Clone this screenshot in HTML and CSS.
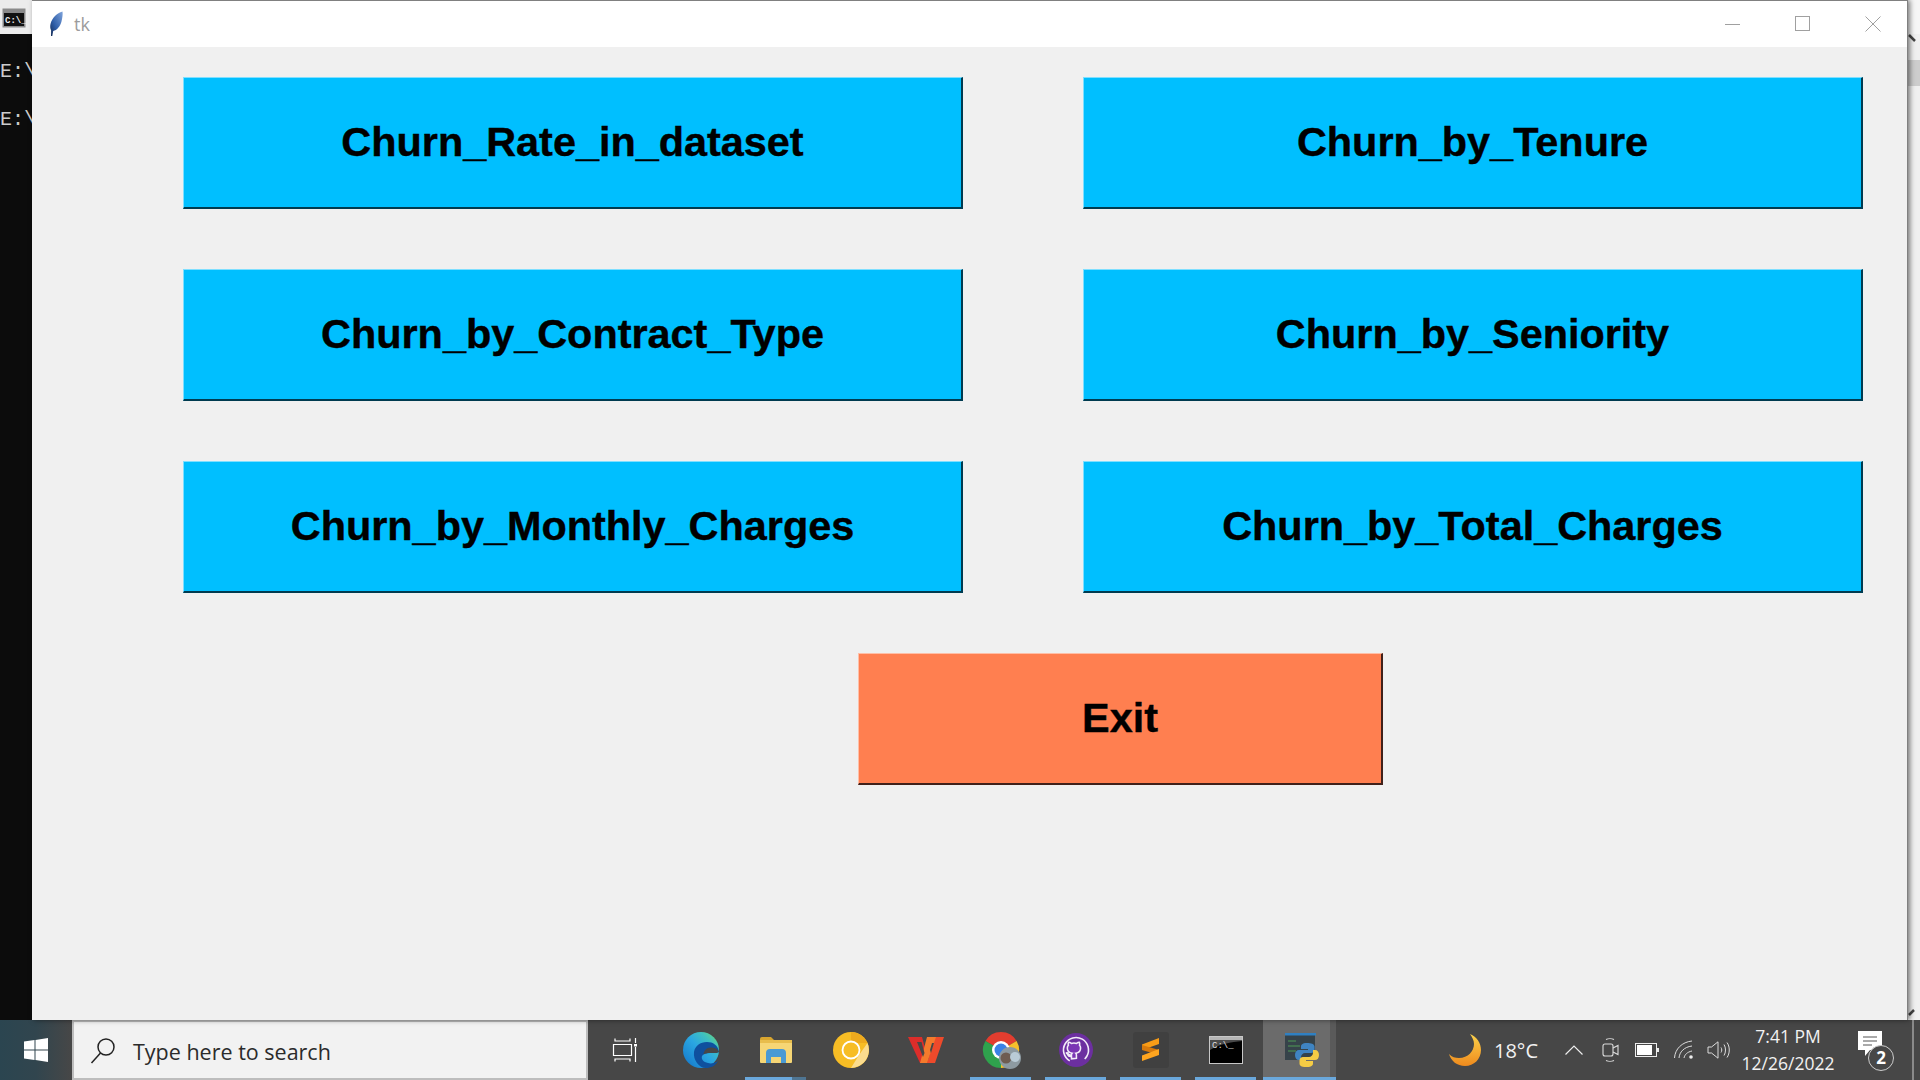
FILE: index.html
```html
<!DOCTYPE html>
<html lang="en">
<head>
    <meta charset="UTF-8">
    <title>tk</title>
    <link rel="stylesheet" href="styles.css">
</head>
<body>
    <div class="desktop">
        <div class="console">
            <div class="console-head">
                <svg width="24" height="20" viewBox="0 0 24 20">
                    <rect x="0.5" y="0.5" width="23" height="19" fill="#8a8a8a"/>
                    <rect x="2" y="5" width="20" height="13" fill="#111"/>
                    <text x="3" y="15" class="console-icon-text">C:\_</text>
                </svg>
            </div>
            <div class="console-body">
                <div>E:\</div>
                <div>E:\</div>
            </div>
        </div>

        <div class="window">
            <div class="titlebar">
                <svg class="feather" width="16" height="26" viewBox="0 0 16 26">
                    <defs>
                        <linearGradient id="featherFill" x1="1" y1="0" x2="0" y2="1">
                            <stop offset="0" stop-color="#7fa4dc"/>
                            <stop offset="0.6" stop-color="#2f5ea8"/>
                            <stop offset="1" stop-color="#14284f"/>
                        </linearGradient>
                    </defs>
                    <path d="M13.5 0.5C8 2 3 7 1.5 13c-.6 2.6-.2 4.8.6 6.3L2 25h1.3l.9-5c3.8-.8 7-4.5 8.3-9.5.8-3.3 1.5-7.5 1-10z" fill="url(#featherFill)"/>
                </svg>
                <span class="title-text">tk</span>
                <div class="window-controls">
                    <svg width="16" height="16" viewBox="0 0 16 16"><path d="M0 8.5h15" stroke="#a0a0a0" fill="none"/></svg>
                    <svg width="16" height="16" viewBox="0 0 16 16"><rect x="0.5" y="0.5" width="14" height="14" stroke="#a0a0a0" fill="none"/></svg>
                    <svg width="16" height="16" viewBox="0 0 16 16"><path d="M0.5 0.5l15 15M15.5 0.5l-15 15" stroke="#a0a0a0" fill="none"/></svg>
                </div>
            </div>
            <div class="app">
                <div class="button-grid">
                    <button class="chart-button">Churn_Rate_in_dataset</button>
                    <button class="chart-button">Churn_by_Tenure</button>
                    <button class="chart-button">Churn_by_Contract_Type</button>
                    <button class="chart-button">Churn_by_Seniority</button>
                    <button class="chart-button">Churn_by_Monthly_Charges</button>
                    <button class="chart-button">Churn_by_Total_Charges</button>
                </div>
                <button class="exit-button">Exit</button>
            </div>
        </div>

        <div class="console-edge">
            <div class="edge-head"></div>
            <div class="edge-track">
                <svg width="12" height="10" viewBox="0 0 12 10"><path d="M1 1l6 6" stroke="#444" stroke-width="2.5" fill="none"/></svg>
                <div class="edge-thumb"></div>
                <div class="edge-fill"></div>
                <svg width="12" height="12" viewBox="0 0 12 12"><path d="M1 7l5-5" stroke="#444" stroke-width="2.5" fill="none"/></svg>
            </div>
        </div>
    </div>

    <div class="taskbar">
        <div class="start">
            <svg width="24" height="24" viewBox="0 0 24 24" fill="#fff">
                <path d="M0 3.5l10.5-1.5v9.500H0zM11.500 1.900L24 0v11.500H11.500zM0 12.500h10.500V22L0 20.500zM11.500 12.500H24V24l-12.500-1.900z"/>
            </svg>
        </div>
        <div class="search">
            <svg width="26" height="28" viewBox="0 0 26 28" fill="none" stroke="#222" stroke-width="1.5">
                <circle cx="16" cy="10" r="8"/>
                <path d="M10.5 16L1.500 26"/>
            </svg>
            <span>Type here to search</span>
        </div>

        <div class="task-item task-view">
            <svg width="26" height="24" viewBox="0 0 26 24" fill="none" stroke="#fff" stroke-width="1.2">
                <path d="M3 .5v2.500h15V.5M3 23.500V21h15v2.500M1.500 6.500h18v11h-18zM23.500 0v5M23.500 9v15"/>
                <rect x="22" y="6" width="3" height="2.5" fill="#fff" stroke="none"/>
            </svg>
        </div>
        <div class="task-item">
            <svg width="36" height="36" viewBox="0 0 36 36">
                <defs>
                    <linearGradient id="edgeOuter" x1="0" y1="1" x2="1" y2="0">
                        <stop offset="0" stop-color="#1273c8"/>
                        <stop offset="0.5" stop-color="#2aa6e2"/>
                        <stop offset="0.75" stop-color="#3fc0c0"/>
                        <stop offset="1" stop-color="#74dc66"/>
                    </linearGradient>
                </defs>
                <circle cx="18" cy="18" r="18" fill="url(#edgeOuter)"/>
                <path d="M36 20c-1-7-6-10-12-10-7 0-12 4-13 10-1 8 5 16 12 16 5 0 9-2 12-7-3 2-7 3-10 2-5-1-7-4-6-7 1-2 4-3 8-3 3 0 6 .5 9-1z" fill="#0f509e"/>
                <path d="M36 20c-3 1.500-6 1-9 1-3 0-5 .5-6.500 1.500 .5-4 3-7 7-7 4 0 7 1 8.500 4.500z" fill="#474747"/>
            </svg>
        </div>
        <div class="task-item task-open task-split">
            <svg width="32" height="28" viewBox="0 0 32 28">
                <path d="M0 3a2 2 0 0 1 2-2h9l4 4H0z" fill="#d8a52f"/>
                <rect x="0" y="4" width="32" height="23" rx="1" fill="#f6d675"/>
                <rect x="0" y="4" width="32" height="3" fill="#e8bd4c"/>
                <path d="M6 27V17a4 4 0 0 1 4-4h12a4 4 0 0 1 4 4v10h-5v-6H11v6z" fill="#4a9ad4"/>
            </svg>
        </div>
        <div class="task-item">
            <svg width="36" height="36" viewBox="0 0 36 36">
                <circle cx="18" cy="18" r="18" fill="#f7bd25"/>
                <path d="M18 0a18 18 0 0 1 16.500 11H18z" fill="#eeaa1e"/>
                <path d="M34.500 11A18 18 0 0 1 18 36l8-13 8.500-12z" fill="#fbdc8e"/>
                <circle cx="18" cy="18" r="8.500" fill="#f7bd25" stroke="#fff" stroke-width="1.8"/>
            </svg>
        </div>
        <div class="task-item">
            <svg width="36" height="28" viewBox="0 0 36 28">
                <path d="M0 1h14l7 26h-9z" fill="#dc2d2a"/>
                <path d="M36 1H27l-8 26h8z" fill="#ee4a2b"/>
                <path d="M19 1h9l-9 26h-7z" fill="#f47a2c"/>
                <path d="M9 6h4.500l3 11-1.500 4zM24 7h2l-3 10-1-3z" fill="#474747"/>
            </svg>
        </div>
        <div class="task-item task-open">
            <svg class="chrome-icon" width="36" height="36" viewBox="0 0 36 36">
                <path d="M18 18L2.400 9A18 18 0 0 1 33.600 9z" fill="#e23d2f"/>
                <path d="M18 18L33.600 9A18 18 0 0 1 18 36z" fill="#f6c02c"/>
                <path d="M18 18L18 36A18 18 0 0 1 2.400 9z" fill="#2fa24d"/>
                <circle cx="18" cy="18" r="9" fill="#fff"/>
                <circle cx="18" cy="18" r="6.500" fill="#3b82e6"/>
                <circle cx="27" cy="26" r="11" fill="#8d9aa1"/>
                <circle cx="23" cy="26" r="5.500" fill="#6e5c50"/>
                <circle cx="32" cy="25" r="5" fill="#b9cbd6"/>
            </svg>
        </div>
        <div class="task-item task-open">
            <svg width="34" height="34" viewBox="0 0 34 34">
                <circle cx="17" cy="17" r="17" fill="#6c2fa0"/>
                <circle cx="17" cy="17" r="12.500" fill="none" stroke="#f2ecf8" stroke-width="1.6" stroke-dasharray="62 17" transform="rotate(120 17 17)"/>
                <g transform="translate(6.5 6.5) scale(1.3)">
                    <path fill="#7a35b4" stroke="#f2ecf8" stroke-width="1.2" d="M4.600 14.900c0-.4 0-1.200 0-2-2 .4-2.600-.5-2.800-1-.1-.3-.5-1-.8-1.200-.3-.1-.7-.5 0-.5.600 0 1.100.6 1.200.8.700 1.200 1.900.9 2.400.7.100-.5.300-.9.500-1.100-1.800-.2-3.700-.9-3.700-4 0-.9.300-1.600.8-2.200-.1-.2-.4-1 .1-2.200 0 0 .7-.2 2.200.8.600-.2 1.300-.3 2-.3s1.400.1 2 .3c1.500-1 2.200-.8 2.200-.8.400 1.100.2 1.900.1 2.200.5.600.8 1.300.8 2.200 0 3.100-1.900 3.800-3.700 4 .3.300.5.800.5 1.500 0 1.100 0 2 0 2.300z"/>
                </g>
            </svg>
        </div>
        <div class="task-item task-open">
            <svg width="36" height="36" viewBox="0 0 36 36">
                <rect width="36" height="36" rx="3" fill="#404040"/>
                <path d="M26 6v6L9 18v-5.500z" fill="#f89c17"/>
                <path d="M9 13l17 5v5L9 18z" fill="#d87a0c"/>
                <path d="M26 17v6L9 29v-5.500z" fill="#ffa51f"/>
            </svg>
        </div>
        <div class="task-item task-open">
            <svg width="34" height="28" viewBox="0 0 34 28">
                <rect x="0.5" y="0.5" width="33" height="27" fill="#000" stroke="#c8c8c8"/>
                <rect x="1" y="1" width="32" height="3" fill="#b5b5b5"/>
                <path d="M1 14C10 8 22 6 33 5V4H1z" fill="#4a4a4a"/>
                <text x="3" y="12" class="cmd-text">C:\_</text>
            </svg>
        </div>
        <div class="task-item task-active">
            <svg class="python-icon" width="36" height="36" viewBox="0 0 36 36">
                <rect x="1" y="2" width="30" height="26" fill="#36434a"/>
                <rect x="1" y="1" width="31" height="2.5" fill="#2f80c2"/>
                <path d="M4 9h8M4 14h12M4 19h8" stroke="#4f9a54" stroke-width="1.2"/>
                <path d="M22 11c-5 0-6 2-6 3.500V17h7v1h-9c-2.500 0-4 2-4 5s1.500 5 4 5h2v-3c0-2 2-4 4-4h6c2 0 3.500-1.500 3.500-3.500v-3C29.500 12 26 11 22 11z" fill="#3f84c2" transform="translate(1 0)"/>
                <path d="M24 35c5 0 6-2 6-3.500V29h-7v-1h9c2.500 0 4-2 4-5s-1.500-5-4-5h-2v3c0 2-2 4-4 4h-6c-2 0-3.500 1.500-3.500 3.500v3c0 3 3.500 3.500 7.500 3.500z" fill="#f5cc45" transform="translate(-1 0)"/>
            </svg>
        </div>
        <div class="task-stub"></div>

        <div class="tray">
            <svg class="tray-moon" width="34" height="34" viewBox="0 0 34 34">
                <defs>
                    <linearGradient id="moonFill" x1="0" y1="0" x2="0" y2="1">
                        <stop offset="0" stop-color="#fbd24a"/>
                        <stop offset="1" stop-color="#ef8a1d"/>
                    </linearGradient>
                </defs>
                <path d="M22 1c7 3 11 9 11 16 0 9-7 16-16 16-8 0-14-5-16-12 3 3 6 4 10 4 9 0 15-7 15-14 0-4-2-7-4-10z" fill="url(#moonFill)"/>
            </svg>
            <span class="temp">18°C</span>
            <svg class="tray-chevron" width="18" height="10" viewBox="0 0 18 10"><path d="M.5 9.500L9 1l8.500 8.500" stroke="#eee" stroke-width="1.2" fill="none"/></svg>
            <svg class="tray-meet" width="18" height="24" viewBox="0 0 18 24" fill="none" stroke="#ddd" stroke-width="1.1">
                <rect x="1" y="6" width="10" height="12" rx="2"/>
                <path d="M11 10l5-2.500v9L11 14"/>
                <path d="M4 1.500c2-1 6-1 8 0M4 22.500c2 1 6 1 8 0"/>
            </svg>
            <svg class="tray-battery" width="24" height="14" viewBox="0 0 24 14">
                <rect x="0.5" y="0.5" width="21" height="13" fill="none" stroke="#eee"/>
                <rect x="2" y="2" width="15" height="10" fill="#fff"/>
                <rect x="22" y="5" width="2" height="4" fill="#eee"/>
            </svg>
            <svg class="tray-wifi" width="20" height="20" viewBox="0 0 20 20" fill="none" stroke="#ddd">
                <path d="M.5 18C1 9 8 2 18 1M5 18c.5-6 5-11 13-12M10 18c.5-3 3-6 8-7"/>
                <circle cx="17" cy="17" r="1.8" fill="#eee" stroke="none"/>
            </svg>
            <svg class="tray-volume" width="24" height="18" viewBox="0 0 24 18" fill="none" stroke="#ddd">
                <path d="M1 6h3.500L11 .8v16.400L4.500 12H1z"/>
                <path d="M14 6.500c1 1.500 1 3.500 0 5M17 3.500c2 3 2 8 0 11M20 1.500c3 4 3 11 0 15"/>
            </svg>
            <div class="clock">
                <span>7:41 PM</span>
                <span>12/26/2022</span>
            </div>
            <div class="notify">
                <svg width="24" height="26" viewBox="0 0 24 26">
                    <path d="M0 0h24v19H12l-5 6v-6H0z" fill="#fff"/>
                    <path d="M5 6h14M5 10h14M5 14h9" stroke="#555"/>
                </svg>
                <span class="notify-badge">2</span>
            </div>
            <div class="show-desktop"></div>
        </div>
    </div>
</body>
</html>
```

FILE: styles.css
```css
html, body {
    margin: 0;
    height: 1080px;
    overflow: hidden;
    background: #0c0c0c;
}
svg {
    display: block;
    flex: none;
}
.desktop {
    display: flex;
    height: 1020px;
}

/* console behind the tk window */
.console {
    width: 32px;
    flex: none;
    overflow: hidden;
}
.console-head {
    height: 34px;
    box-sizing: border-box;
    padding: 8px 0 0 2px;
    background: #ececec;
}
.console-icon-text {
    font-family: "Liberation Mono", monospace;
    font-size: 9px;
    font-weight: bold;
    fill: #eee;
}
.console-body {
    padding-top: 14px;
    color: #cccccc;
    font-family: "Liberation Mono", monospace;
    font-size: 20px;
    line-height: 48px;
    white-space: nowrap;
}
.console-edge {
    width: 12px;
    flex: none;
    display: flex;
    flex-direction: column;
}
.edge-head {
    height: 34px;
    background: #f6f6f6;
}
.edge-track {
    flex: 1;
    display: flex;
    flex-direction: column;
    background: #f0f0f0;
}
.edge-thumb {
    height: 26px;
    margin-top: 16px;
    background: #cdcdcd;
}
.edge-fill {
    flex: 1;
}

/* tk window */
.window {
    width: 1876px;
    flex: none;
    box-sizing: border-box;
    display: flex;
    flex-direction: column;
    position: relative;
    z-index: 1;
    border-top: 1px solid #808080;
    border-right: 1px solid #808080;
    background: #f0f0f0;
    box-shadow: 2px 0 5px rgba(0, 0, 0, 0.5);
}
.titlebar {
    height: 46px;
    flex: none;
    display: flex;
    align-items: center;
    background: #fff;
}
.feather {
    margin-left: 17px;
}
.title-text {
    margin-left: 9px;
    color: #9c9c9c;
    font-family: "Open Sans", sans-serif;
    font-size: 18px;
}
.window-controls {
    margin-left: auto;
    margin-right: 26px;
    display: flex;
    gap: 54px;
}
.app {
    padding: 30px 0 0 151px;
}
.button-grid {
    display: grid;
    grid-template-columns: 780px 780px;
    grid-auto-rows: 132px;
    column-gap: 120px;
    row-gap: 60px;
}
.chart-button, .exit-button {
    padding: 0 0 1px;
    box-sizing: border-box;
    color: #000;
    font-family: "Liberation Sans", sans-serif;
    font-size: 41.4px;
    font-weight: bold;
    -webkit-text-stroke: 0.4px #000;
    border-style: solid;
    border-width: 1px 2px 2px 1px;
}
.chart-button {
    background: #00bfff;
    border-color: #7fdfff #003b50 #003b50 #7fdfff;
}
.exit-button {
    display: block;
    width: 525px;
    height: 132px;
    margin: 60px 0 0 675px;
    background: #ff7f50;
    border-color: #ffbfa7 #40201a #40201a #ffbfa7;
}

/* windows taskbar */
.taskbar {
    height: 60px;
    display: flex;
    background: #474747;
}
.start {
    width: 72px;
    flex: none;
    box-sizing: border-box;
    padding: 18px 0 0 24px;
    background: linear-gradient(90deg, #2b4550, #31454e 50%, #474747);
}
.search {
    width: 516px;
    flex: none;
    box-sizing: border-box;
    display: flex;
    align-items: center;
    gap: 17px;
    padding: 2px 0 0 16px;
    border: 2px solid #bdbdbd;
    background: #f2f2f2;
    color: #2b2b2b;
    font-family: "Open Sans", sans-serif;
    font-size: 21.5px;
}
.task-item {
    width: 75px;
    flex: none;
    box-sizing: border-box;
    display: flex;
    align-items: center;
    justify-content: center;
    position: relative;
}
.task-view svg {
    margin-right: 2px;
}
.chrome-icon {
    overflow: visible;
}
.python-icon {
    margin-left: 3px;
}
.task-open::after, .task-active::after {
    content: "";
    position: absolute;
    left: 7px;
    right: 7px;
    bottom: 0;
    height: 3px;
    background: #6aa8dc;
}
.task-split::after {
    background: linear-gradient(90deg, #6aa8dc 77%, #4f7592 77%);
}
.task-active {
    width: 67px;
    padding-left: 7px;
    background: #6b6b6b;
}
.task-active::after {
    left: 0;
    right: 0;
}
.task-stub {
    width: 6px;
    flex: none;
    background: #5a5a5a;
    border-bottom: 3px solid #6aa8dc;
    box-sizing: border-box;
}
.tray {
    flex: 1;
    display: flex;
    align-items: center;
    color: #f2f2f2;
    font-family: "Open Sans", sans-serif;
}
.tray-moon {
    margin-left: 112px;
}
.temp {
    margin-left: 12px;
    font-size: 20px;
}
.tray-chevron {
    margin-left: 27px;
}
.tray-meet {
    margin-left: 19px;
}
.tray-battery {
    margin-left: 15px;
}
.tray-wifi {
    margin-left: 15px;
}
.tray-volume {
    margin-left: 13px;
}
.clock {
    width: 100px;
    margin-left: 7px;
    display: flex;
    flex-direction: column;
    align-items: center;
    font-size: 17.5px;
    line-height: 27px;
}
.notify {
    position: relative;
    margin-left: 20px;
    width: 36px;
    height: 34px;
    margin-top: -4px;
}
.notify-badge {
    position: absolute;
    right: 0;
    bottom: -6px;
    width: 24px;
    height: 24px;
    border: 1px solid #ccc;
    border-radius: 50%;
    background: #474747;
    color: #fff;
    font-size: 17px;
    font-weight: bold;
    line-height: 24px;
    text-align: center;
}
.show-desktop {
    width: 2px;
    height: 60px;
    margin-left: auto;
    margin-right: 6px;
    background: #8a8a8a;
}
.cmd-text {
    font-family: "Liberation Mono", monospace;
    font-size: 9px;
    fill: #ddd;
}
```
